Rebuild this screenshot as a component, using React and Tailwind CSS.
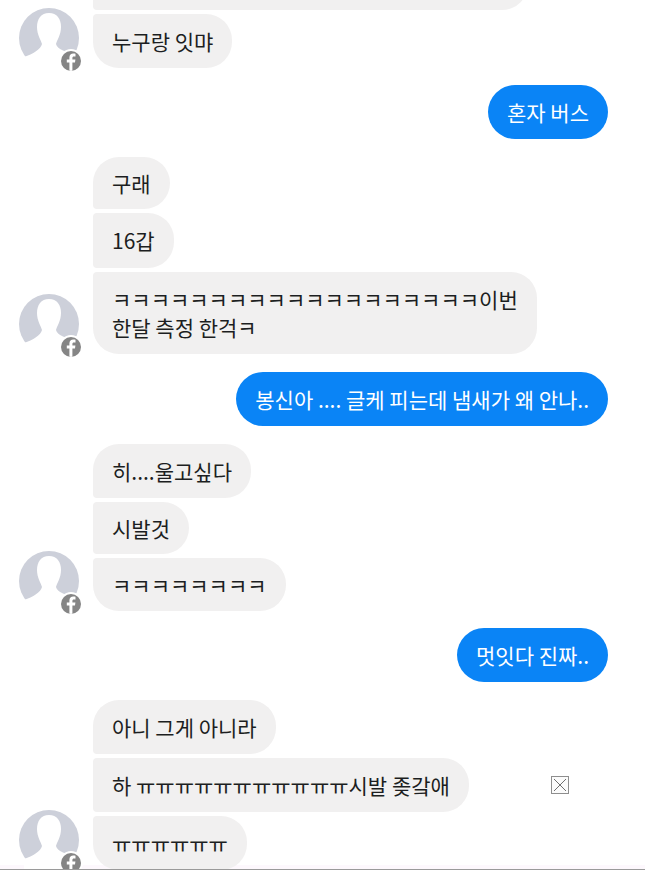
const font = { };

function Avatar() {
  return (
    <div className="relative w-[60px] h-[60px] shrink-0">
      <svg viewBox="0 0 60 60" className="w-[60px] h-[60px] block">
        <circle cx="30" cy="30" r="30" fill="#cdd0da" />
        <path d="M30 5C22 5 18 11 18 19C18 27 22 32 23 36C22 41 14 46 5 49L5 62L56 62L56 47C47 44 38 41 37 36C38 32 42 27 42 19C42 11 38 5 30 5Z" fill="#ffffff" />
      </svg>
      <div className="absolute left-[40px] top-[41px] w-6 h-6 rounded-full bg-white flex items-center justify-center">
        <div className="w-5 h-5 rounded-full bg-[#858585] overflow-hidden">
          <svg viewBox="0 0 20 20" className="w-5 h-5 block">
            <path d="M11.4 20V11.6H14L14.4 8.6H11.4V6.9C11.4 6 11.7 5.4 12.9 5.4H14.5V2.7C14.1 2.7 13.3 2.6 12.3 2.6C10 2.6 8.4 4 8.4 6.6V8.6H5.8V11.6H8.4V20Z" fill="#ffffff" />
          </svg>
        </div>
      </div>
    </div>
  );
}

const base = "px-[19px] py-[13px] text-[21px] leading-[28px] text-[#1c1e21]";

function In({ children, kind = "last", className = "" }) {
  const r =
    kind === "first"
      ? "rounded-tl-[26px] rounded-bl-[4px]"
      : kind === "mid"
      ? "rounded-l-[4px]"
      : "rounded-tl-[4px] rounded-bl-[26px]";
  return (
    <div className={`w-fit bg-[#f1f0f0] rounded-r-[26px] ${r} ${base} ${className}`}>{children}</div>
  );
}

function Out({ children }) {
  return (
    <div className="flex justify-end pr-[37px]">
      <div className="bg-[#0a84f6] rounded-[27px] px-[19px] py-[13px] text-[21px] leading-[28px] text-white">{children}</div>
    </div>
  );
}

function Group({ children }) {
  return (
    <div className="flex items-end gap-[14px] pl-[19px]">
      <Avatar />
      <div className="flex flex-col gap-1 min-w-0">{children}</div>
    </div>
  );
}

export default function App() {
  return (
    <div className="bg-white min-h-[870px]">
      <div
        className="w-[645px] h-[870px] overflow-hidden border-b border-[#9a9a9a] bg-[linear-gradient(to_bottom,#ffffff_865px,#fdf8fd_865px)] flex flex-col"
        style={{ fontFamily: '"Noto Sans CJK KR", "Noto Sans", sans-serif' }}
      >
        <div className="flex flex-col mt-[-44px]">
          <Group>
            <div className="w-[435px] h-[54px] bg-[#f1f0f0] rounded-r-[26px] rounded-l-[4px]" />
            <In>누구랑 잇먀</In>
          </Group>
          <div className="mt-[17px]">
            <Out>혼자 버스</Out>
          </div>
          <div className="mt-[18px]">
            <Group>
              <In kind="first" className="h-[52px] !py-[12px]">구래</In>
              <In kind="mid" className="h-[55px]">16갑</In>
              <In>
                ㅋㅋㅋㅋㅋㅋㅋㅋㅋㅋㅋㅋㅋㅋㅋㅋㅋㅋㅋ이번
                <br />
                한달 측정 한걱ㅋ
              </In>
            </Group>
          </div>
          <div className="mt-[18px]">
            <Out>봉신아 .... 글케 피는데 냄새가 왜 안나..</Out>
          </div>
          <div className="mt-[18px]">
            <Group>
              <In kind="first">히....울고싶다</In>
              <In kind="mid" className="h-[52px] !py-[12px]">시발것</In>
              <In className="h-[53px]">ㅋㅋㅋㅋㅋㅋㅋㅋ</In>
            </Group>
          </div>
          <div className="mt-[17px]">
            <Out>멋잇다 진짜..</Out>
          </div>
          <div className="mt-[18px]">
            <Group>
              <In kind="first">아니 그게 아니라</In>
              <div className="flex items-center gap-[82px]">
                <In kind="mid" className="whitespace-nowrap">하 ㅠㅠㅠㅠㅠㅠㅠㅠㅠㅠㅠ시발 좆갘애</In>
                <svg viewBox="0 0 18 18" className="w-[18px] h-[18px] shrink-0">
                  <rect x="0.5" y="0.5" width="17" height="17" fill="#fbfbfb" stroke="#8e8e8e" />
                  <path d="M3 3L15 15M15 3L3 15" stroke="#6f6f6f" strokeWidth="1" />
                </svg>
              </div>
              <In>ㅠㅠㅠㅠㅠㅠ</In>
            </Group>
          </div>
        </div>
      </div>
    </div>
  );
}
